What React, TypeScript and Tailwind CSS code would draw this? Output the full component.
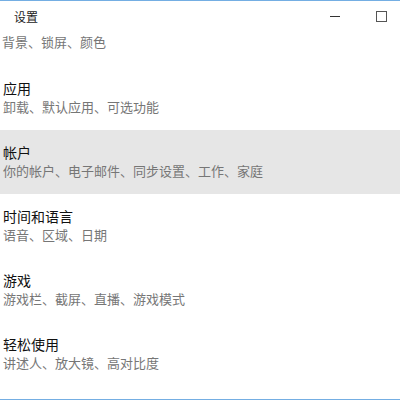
const font = { fontFamily: '"Noto Sans CJK SC", "Microsoft YaHei", sans-serif' }

const items = [
  { title: '应用', desc: '卸载、默认应用、可选功能' },
  { title: '帐户', desc: '你的帐户、电子邮件、同步设置、工作、家庭', active: true },
  { title: '时间和语言', desc: '语音、区域、日期' },
  { title: '游戏', desc: '游戏栏、截屏、直播、游戏模式' },
  { title: '轻松使用', desc: '讲述人、放大镜、高对比度' },
]

function Row({ title, desc, active }: { title: string; desc: string; active?: boolean }) {
  return (
    <div className={`h-16 pt-[13px] pl-[3px] ${active ? 'bg-[#e6e6e6]' : ''}`}>
      <p className="text-[14px] leading-[19px] text-[#111]">{title}</p>
      <p className="text-[13px] leading-[18px] text-[#767676]">{desc}</p>
    </div>
  )
}

export default function App() {
  return (
    <div className="w-[400px] h-[400px] bg-white flex flex-col overflow-hidden" style={font}>
      <div className="h-px bg-[#74aee3]" />
      {/* title bar */}
      <div className="h-[31px] flex items-center">
        <span className="ml-[14px] text-[12px] text-[#222]">设置</span>
        <div className="ml-auto w-[10px] h-px bg-[#333] mr-[36px]" />
        <div className="w-[11px] h-[11px] border border-[#555] mr-[13px]" />
      </div>
      {/* list, scrolled */}
      <div className="flex-1 flex flex-col">
        <div className="h-[34px] pl-[2px]">
          <p className="text-[13px] leading-[19px] text-[#767676]">背景、锁屏、颜色</p>
        </div>
        {items.map(it => <Row key={it.title} {...it} />)}
      </div>
      <div className="h-px bg-[#74aee3]" />
    </div>
  )
}
